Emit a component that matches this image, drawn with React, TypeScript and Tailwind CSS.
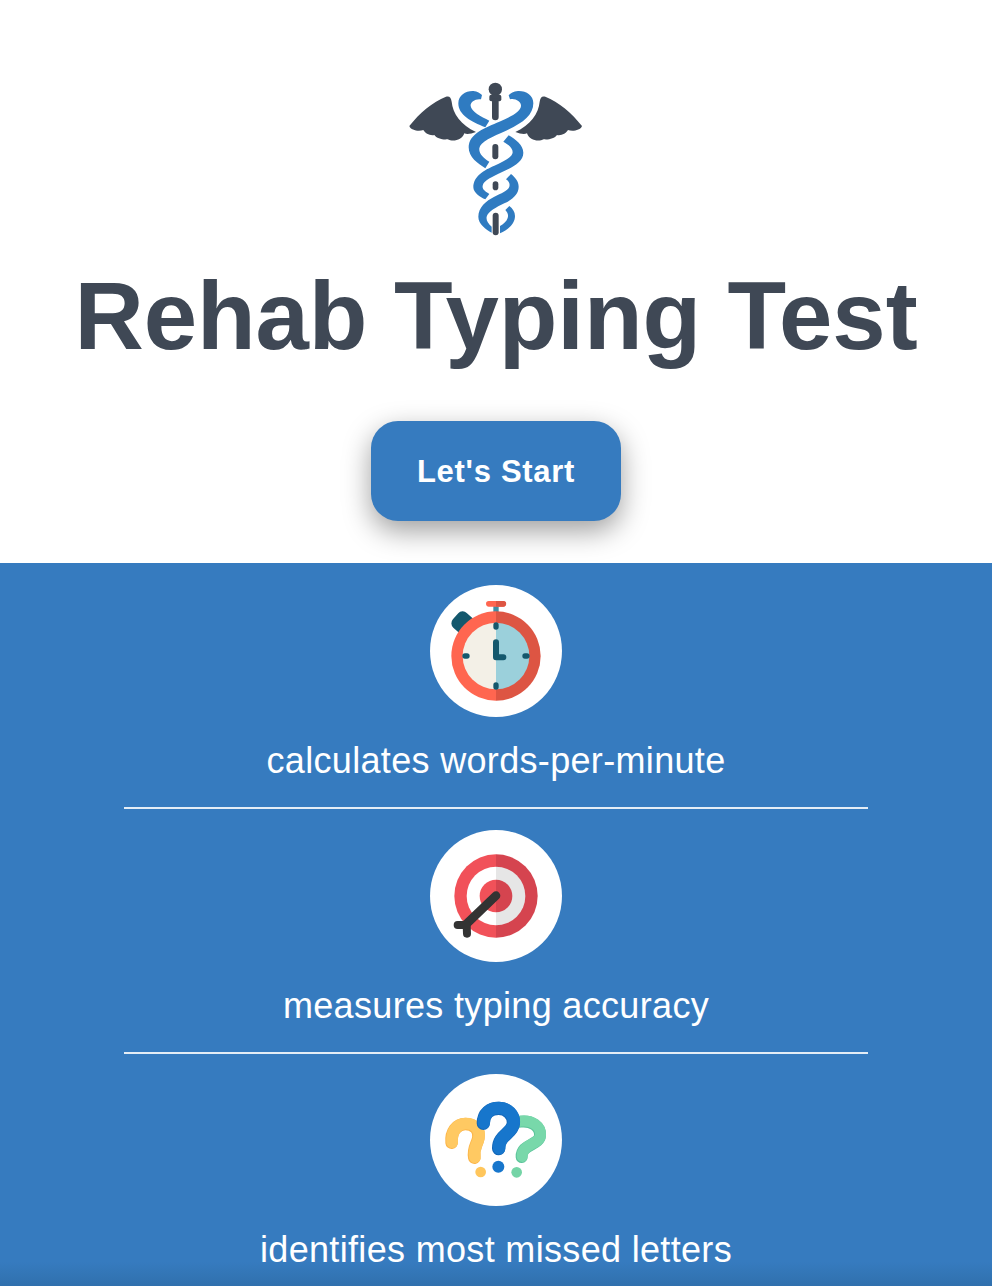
const Wing = () => (
  <path d="M40 168C70 130 110 95 150 80C160 77 165 82 167 95C170 130 195 165 240 186C225 192 212 193 205 190C198 212 170 216 155 208C140 210 122 205 115 195C102 198 88 190 82 180C70 185 45 182 40 168Z" />
);

const Logo = () => (
  <svg viewBox="0 0 600 525" className="block w-[200px] h-[175px]" fill="none">
    <g fill="#3f4855">
      <Wing />
      <g transform="matrix(-1 0 0 1 598 0)">
        <Wing />
      </g>
      <circle cx="298" cy="58" r="20" />
      <rect x="280" y="74" width="36" height="20" rx="6" />
      <rect x="288" y="85" width="20" height="66" rx="10" />
      <rect x="289" y="222" width="18" height="46" rx="9" />
      <rect x="290" y="334" width="17" height="27" rx="8.5" />
      <rect x="290" y="428" width="18" height="68" rx="9" />
    </g>
    <g fill="#2f7bc1">
      <path d="M255 88C240 85 222 95 224 108C226 125 255 140 280 152L268 172C225 155 187 135 187 100C187 75 210 62 232 63C245 64 252 70 258 75Z" />
      <path d="M342 88C358 84 376 95 375 108C374 125 345 140 310 155C270 172 218 190 218 232C218 262 245 280 268 295L280 275C262 265 248 250 250 235C252 215 290 200 330 182C380 160 412 135 412 100C412 75 390 62 366 63C352 64 344 70 338 76Z" />
      <path d="M338 196L322 215C340 225 350 235 350 247C350 262 320 275 295 287C265 300 232 318 232 352C232 368 252 382 268 388L280 372C268 365 258 358 260 347C262 330 290 320 320 305C350 292 382 275 382 248C382 225 358 208 338 196Z" />
      <path d="M345 312L330 328C340 335 342 342 340 350C336 362 315 370 295 380C270 392 247 412 247 440C247 462 270 478 287 488L287 470C275 460 270 450 272 440C276 425 300 412 325 400C350 388 368 372 368 350C368 335 358 322 345 312Z" />
      <path d="M340 408L328 420C335 428 338 435 335 444C332 455 322 462 312 468L312 490C335 480 357 462 357 438C357 426 350 416 340 408Z" />
    </g>
  </svg>
);

const Stopwatch = () => (
  <svg viewBox="0 0 396 396" className="block w-[132px] h-[132px]">
    <circle cx="198" cy="198" r="198" fill="#fff" />
    <g transform="translate(-30 -15)">
      <rect x="99" y="99" width="60" height="60" rx="18" fill="#14586d" transform="rotate(42 129 129)" />
      <rect x="220" y="76" width="16" height="24" fill="#3f8ea5" />
      <rect x="198" y="63" width="60" height="17" rx="8.5" fill="#ff6650" />
      <path d="M228 63H250A8.5 8.5 0 0 1 250 80H228Z" fill="#dd5543" />
      <path d="M228 94A134 134 0 0 0 228 362Z" fill="#ff6650" />
      <path d="M228 94A134 134 0 0 1 228 362Z" fill="#dd5543" />
      <path d="M228 128A100 100 0 0 0 228 328Z" fill="#f3f0e7" />
      <path d="M228 128A100 100 0 0 1 228 328Z" fill="#9bd0db" />
      <g stroke="#14586d" strokeWidth="16" strokeLinecap="round" fill="none">
        <path d="M228 135V141M228 315V321M135 228H141M315 228H321" />
        <path d="M228 187V232H250" strokeWidth="18" strokeLinejoin="round" />
      </g>
    </g>
  </svg>
);

const Target = () => (
  <svg viewBox="0 0 396 396" className="block w-[132px] h-[132px]">
    <circle cx="198" cy="198" r="198" fill="#fff" />
    <g transform="translate(-30 -15)">
      <path d="M228 88A125 125 0 0 0 228 338Z" fill="#f15159" />
      <path d="M228 88A125 125 0 0 1 228 338Z" fill="#d5444f" />
      <path d="M228 125A88 88 0 0 0 228 301Z" fill="#fff" />
      <path d="M228 125A88 88 0 0 1 228 301Z" fill="#e6e6e6" />
      <path d="M228 164A49 49 0 0 0 228 262Z" fill="#f15159" />
      <path d="M228 164A49 49 0 0 1 228 262Z" fill="#d5444f" />
      <g stroke="#333333" strokeLinecap="round" fill="none">
        <path d="M228 212L136 300" strokeWidth="26" />
        <path d="M113 300H140L141 326" strokeWidth="24" strokeLinejoin="round" />
      </g>
    </g>
  </svg>
);

const Mark = ({ d, dark, light, width }: { d: string; dark: string; light: string; width: number }) => (
  <>
    <path d={d} stroke={dark} strokeWidth={width} />
    <path d={d} stroke={light} strokeWidth={width - 3} transform="translate(1.5 -1.5)" />
  </>
);

const Questions = () => (
  <svg viewBox="0 0 396 396" className="block w-[132px] h-[132px]">
    <circle cx="198" cy="198" r="198" fill="#fff" />
    <g transform="translate(-30 -12)" fill="none" strokeLinecap="round" strokeLinejoin="round">
      <Mark d="M95 218C92 185 110 162 136 162C162 162 180 180 175 205C171 225 158 235 163 263" dark="#fcb64a" light="#ffc962" width="38" />
      <Mark d="M300 155C335 150 362 170 360 197C358 226 303 222 305 261" dark="#5bc49a" light="#78d8aa" width="36" />
      <Mark d="M190 160C190 130 210 115 236 115C262 115 282 136 280 160C277 192 235 195 236 236" dark="#1367b8" light="#1776cc" width="40" />
      <circle cx="182" cy="306" r="16" fill="#ffc65c" />
      <circle cx="235" cy="290" r="18" fill="#1776cc" />
      <circle cx="290" cy="307" r="16" fill="#74d4a6" />
    </g>
  </svg>
);

const Feature = ({ icon, label, rule, top }: { icon: React.ReactNode; label: string; rule?: boolean; top: string }) => (
  <div className={`flex flex-col items-center ${top}`}>
    {icon}
    <p className="mt-[23px] text-[36px] leading-[41px] tracking-[0.33px] text-white">{label}</p>
    {rule && <div className="mt-[26px] w-[75%] h-[2px] bg-[#e4edf6]" />}
  </div>
);

export default function App() {
  return (
    <div className="relative h-[1286px] overflow-hidden bg-white font-['Liberation_Sans',Arial,sans-serif]">
      <header className="flex h-[563px] flex-col items-center pt-[70px]">
        <Logo />
        <h1 className="mt-[16px] text-[96px] leading-[110px] font-bold tracking-[-0.08px] text-[#3f4855] whitespace-nowrap">Rehab Typing Test</h1>
        <button className="mt-[50px] flex h-[100px] w-[250px] items-center justify-center rounded-[27px] bg-[#367bbf] pt-[2px] text-[31px] font-bold tracking-[0.7px] text-white shadow-[0_10px_28px_rgba(0,0,0,0.38)]">Let's Start</button>
      </header>
      <main className="relative h-[723px] bg-[#367bbf]">
        <Feature top="pt-[22px]" icon={<Stopwatch />} label="calculates words-per-minute" rule />
        <Feature top="pt-[21px]" icon={<Target />} label="measures typing accuracy" rule />
        <Feature top="pt-[20px]" icon={<Questions />} label="identifies most missed letters" />
        <div className="absolute inset-x-0 bottom-0 h-[24px] bg-gradient-to-b from-transparent to-[#3070ad]" />
      </main>
    </div>
  );
}
